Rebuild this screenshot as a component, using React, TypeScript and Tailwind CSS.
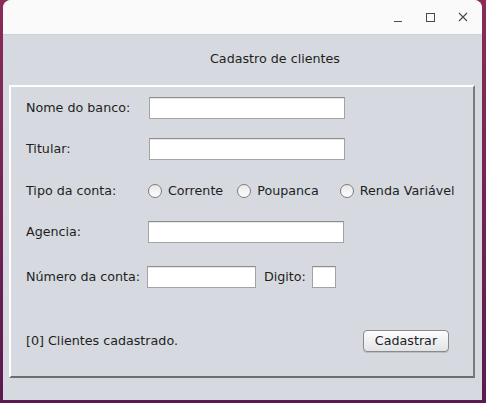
import React from "react";

function TextField({ w }: { w: string }) {
  return (
    <div
      className={`${w} h-[22px] bg-white border border-[#a3a3a3] border-t-[#8c8c8c] shadow-[inset_0_1px_0_#e8e8e8]`}
    />
  );
}

function Radio({ label, gap }: { label: string; gap: string }) {
  return (
    <div className={`flex items-center ${gap}`}>
      <span className="w-[14px] h-[14px] rounded-full border border-[#7d7d7d] bg-gradient-to-b from-[#e9e9e9] to-[#fdfdfd]" />
      <span className="ml-[6px]">{label}</span>
    </div>
  );
}

export default function App() {
  return (
    <div
      className="w-[486px] h-[403px] pl-[3px] pr-[4px] pb-[3px] bg-gradient-to-b from-[#8a2c57] to-[#5b1a4f] text-[12.7px] text-[#1e1e1e]"
      style={{ fontFamily: '"DejaVu Sans", sans-serif' }}
    >
      <div className="h-full flex flex-col bg-[#d6d9df] rounded-t-[8px] overflow-hidden">
        {/* Title bar */}
        <div className="h-[35px] shrink-0 bg-[#fafafa] border-b border-[#d0d1d5] flex items-center justify-end text-[#4a4a4a]">
          <svg width="10" height="10" viewBox="0 0 10 10" className="mr-[22px] mt-[2px]">
            <path d="M1 8.5h8" stroke="#4a4a4a" strokeWidth="1" />
          </svg>
          <svg width="10" height="10" viewBox="0 0 10 10" className="mr-[23px]">
            <rect x="1.5" y="1.5" width="8" height="8" fill="none" stroke="#4a4a4a" strokeWidth="1" />
          </svg>
          <svg width="10" height="10" viewBox="0 0 10 10" className="mr-[14px]">
            <path d="M1 1l8 8M9 1l-8 8" stroke="#4a4a4a" strokeWidth="1.1" />
          </svg>
        </div>

        {/* Heading */}
        <div className="h-[50px] shrink-0 flex items-center pl-[207px] pb-[2px]">
          Cadastro de clientes
        </div>

        {/* Panel */}
        <div className="ml-[6px] w-[466px] h-[293px] border-2 border-t-white border-l-white border-r-[#7b7b7b] border-b-[#6e6e6e] flex flex-col pl-[15px]">
          <div className="mt-[10px] flex items-center h-[22px]">
            <span className="w-[123px]">Nome do banco:</span>
            <TextField w="w-[196px]" />
          </div>
          <div className="mt-[19px] flex items-center h-[22px]">
            <span className="w-[123px]">Titular:</span>
            <TextField w="w-[196px]" />
          </div>
          <div className="mt-[20px] flex items-center h-[22px]">
            <span className="w-[122px]">Tipo da conta:</span>
            <Radio label="Corrente" gap="mr-[14px]" />
            <Radio label="Poupanca" gap="mr-[21px]" />
            <Radio label="Renda Variável" gap="" />
          </div>
          <div className="mt-[19px] flex items-center h-[22px]">
            <span className="w-[122px]">Agencia:</span>
            <TextField w="w-[196px]" />
          </div>
          <div className="mt-[23px] flex items-center h-[22px]">
            <span className="w-[121px]">Número da conta:</span>
            <TextField w="w-[109px]" />
            <span className="ml-[8px] w-[48px]">Digito:</span>
            <TextField w="w-[24px]" />
          </div>
          <div className="mt-[42px] flex items-center h-[22px]">
            <span className="w-[337px]">[0] Clientes cadastrado.</span>
            <button className="w-[86px] h-[22px] rounded-[4px] border border-[#8a8a8a] bg-gradient-to-b from-[#fdfdfd] to-[#e2e3e6] shadow-[0_1px_0_#bdbdbd] leading-none">
              Cadastrar
            </button>
          </div>
        </div>
      </div>
    </div>
  );
}
